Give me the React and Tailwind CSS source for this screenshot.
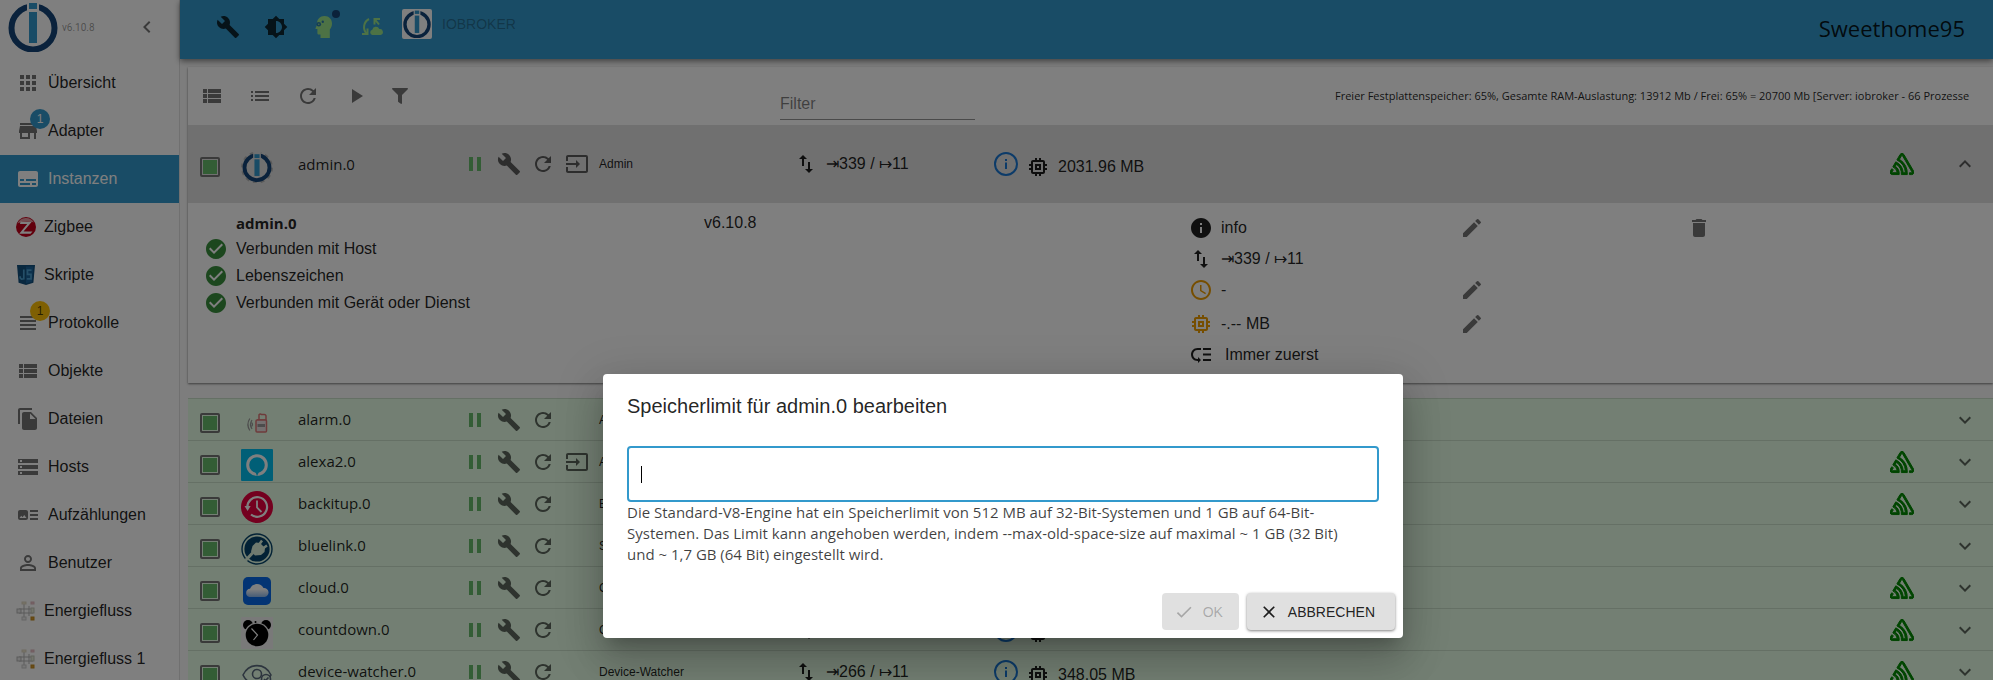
import React from "react";
import {
  MdApps, MdStore, MdSubtitles, MdViewHeadline, MdViewList, MdFileCopy, MdStorage, MdArtTrack,
  MdPermIdentity, MdBuild, MdBrightness6, MdChevronLeft, MdList, MdRefresh, MdPlayArrow, MdPause,
  MdInput, MdImportExport, MdInfo, MdMemory, MdEdit, MdDelete, MdCheckCircle, MdAccessTime,
  MdLowPriority, MdCheck, MdClose, MdExpandMore, MdExpandLess,
} from "react-icons/md";
import { FaFilter } from "react-icons/fa";
import { SiSentry } from "react-icons/si";

function BrokerLogo({ className, gear = false }) {
  return (
    <svg viewBox="0 0 50 50" className={className} aria-hidden="true">
      {gear && <circle cx="25" cy="26" r="23" fill="none" stroke="#b5b5b5" strokeWidth="4" strokeDasharray="6 6.04" />}
      <circle cx="25" cy="26" r={gear ? 19.5 : 21.5} fill={gear ? "#e0e0e0" : "none"} stroke="#144578" strokeWidth="6" />
      <rect x="19" y="0" width="12" height="11" fill={gear ? "#e0e0e0" : "#fff"} />
      <rect x="21" y={gear ? 5 : 1} width="8" height="6" fill="#3399cc" />
      <rect x="21" y={gear ? 13 : 10} width="8" height={gear ? 26 : 31} fill="#3399cc" />
    </svg>
  );
}

function ZigbeeIcon() {
  return (
    <svg viewBox="0 0 20 20" className="size-5">
      <circle cx="10" cy="10" r="10" fill="#c4001a" />
      <path d="M1.500 6.500A9.300 9.300 0 0 1 18 5.500 20 20 0 0 0 1.500 6.500z" fill="#e79aa2" />
      <path d="M4.500 4.500h11.500L7.500 14.500h9l-2 2.300H3.200L11.200 7H4z" fill="#fff" />
    </svg>
  );
}

function ScriptIcon() {
  return (
    <svg viewBox="0 0 20 20" className="size-5">
      <path d="M1 0h18l-1.600 17.800L10 20l-7.400-2.200z" fill="#13507e" />
      <path d="M10 1.500h7.300l-1.300 15.200-6 1.800z" fill="#1a639a" />
      <path d="M7.800 4.500v9.300l-2.300.2-1.300-1.200v-1.500M15.500 5.200h-4v4.200h3.500v4.500h-4.200" fill="none" stroke="#4a9fd0" strokeWidth="1.700" />
    </svg>
  );
}

function EnergyIcon() {
  return (
    <svg viewBox="0 0 20 20" className="size-5" fill="none" stroke="#b5b5b5">
      <path d="M3 8h14M3 12h14M8 2v16M13 5v10" />
      <rect x="1" y="8" width="4" height="4" fill="#ececec" />
      <rect x="6" y="1" width="4" height="2" fill="#f3ead0" stroke="#ddd6c2" />
      <rect x="15" y="1" width="3" height="2" fill="#f3c7cd" stroke="#e0b8be" />
      <rect x="6" y="16" width="4" height="3" fill="#eee" stroke="#ccc" />
      <rect x="15" y="7" width="3" height="5" fill="#e6ead8" stroke="#c4c8b8" />
      <rect x="15" y="16" width="3" height="3" fill="#d69a2c" stroke="#c48a20" />
    </svg>
  );
}

function HeadIcon() {
  return (
    <svg viewBox="0 0 24 24" className="size-6">
      <path d="M12.500 1C17 1 20 4.200 20 8.500c0 2.300-.8 4.500-2.200 6V23H8.500v-3.500H7c-1 0-1.600-.7-1.600-1.600V14H4.200c-.6 0-.9-.6-.6-1.100L5 10V8.500C5 4.300 8 1 12.500 1z" fill="#9be58a" />
      <circle cx="6.800" cy="9.300" r="2.300" fill="#2b7cab" />
      <circle cx="10.800" cy="6.800" r="1.200" fill="#2b7cab" />
      <circle cx="6.800" cy="9.300" r=".7" fill="#9be58a" />
    </svg>
  );
}

function CloudSyncIcon() {
  return (
    <svg viewBox="0 0 24 24" className="size-6">
      <g fill="none" stroke="#9be58a" strokeWidth="2">
        <path d="M9 4C3.500 7 2.500 14 6.500 18.500" />
        <path d="M2 19h5.500v-5.500" />
        <path d="M20 4h-5.500v5.500M15 4.500l4 5" />
      </g>
      <path d="M12.500 20a2.700 2.700 0 0 1-.2-5.300 3.700 3.700 0 0 1 7-.6 3 3 0 0 1 1.200 5.900z" fill="#9be58a" />
    </svg>
  );
}

function AlarmIcon() {
  return (
    <svg viewBox="0 0 32 32" className="size-8" fill="none">
      <g stroke="#999" strokeWidth="1.200">
        <path d="M11 13q-3 4.500 0 9M8.800 11.500q-3.800 6 0 12" />
        <path d="M10.500 15.500q2 2 0 4" />
      </g>
      <path d="M16 13h9v-4a1.500 1.500 0 0 0-1.500-1.500h-3A1.500 1.500 0 0 0 18 9v4" stroke="#d77" strokeWidth="1.500" />
      <rect x="15" y="13" width="10.500" height="12" rx="1" fill="#e8e0e0" stroke="#d77" strokeWidth="1.500" />
      <path d="M16.500 17h7.500v3h-7.500z" fill="#999" />
    </svg>
  );
}

function AlexaIcon() {
  return (
    <svg viewBox="0 0 32 32" className="size-8">
      <rect width="32" height="32" rx="1" fill="#00bfee" />
      <path d="M15.500 26.500v-3.300A7.600 7.600 0 1 1 18 23.300l-2.400 3.200A10.700 10.700 0 1 0 14.500 26.400z" fill="#00bfee" />
      <circle cx="16" cy="16" r="9.300" fill="none" stroke="#fff" strokeWidth="3" />
      <path d="M14 22l2 5 2.500-5z" fill="#00bfee" />
    </svg>
  );
}

function BackupIcon() {
  return (
    <svg viewBox="0 0 32 32" className="size-8">
      <circle cx="16" cy="16" r="16" fill="#e8003f" />
      <path d="M6.500 17a9.800 9.800 0 1 1 3.500 6.500" fill="none" stroke="#fff" strokeWidth="2.200" />
      <path d="M3.500 15h6.200L6.600 20z" fill="#fff" />
      <path d="M16 9.500v7l4.500 4.500" fill="none" stroke="#fff" strokeWidth="1.800" />
    </svg>
  );
}

function PlugIcon() {
  return (
    <svg viewBox="0 0 32 32" className="size-8">
      <circle cx="16" cy="16" r="15" fill="none" stroke="#05436a" strokeWidth="1.400" />
      <circle cx="16" cy="16" r="12.600" fill="#05436a" />
      <path d="M4.500 27.500l7.500-8" stroke="#dff5df" strokeWidth="3" />
      <path d="M11.500 13l3.500-3.500 4 .5 5 5-.5 4-3.500 3-6 .5-4-4z" fill="#dff5df" />
      <path d="M18.500 11l2.500-3.500M22.500 15l3.500-2.500" stroke="#dff5df" strokeWidth="2.500" />
    </svg>
  );
}

function CloudIcon() {
  return (
    <svg viewBox="0 0 32 32" className="size-8">
      <defs>
        <linearGradient id="cloudFill" x1="0" y1="0" x2="0" y2="1">
          <stop offset="0.400" stopColor="#fff" />
          <stop offset="1" stopColor="#8db8ee" />
        </linearGradient>
      </defs>
      <rect x="2" y="2" width="28" height="28" rx="5" fill="#0769e8" />
      <path d="M8.500 22a4.200 4.200 0 0 1 .5-8.300 7.500 7.500 0 0 1 13.500-.7 4.500 4.500 0 0 1 1 9z" fill="url(#cloudFill)" />
    </svg>
  );
}

function CountdownIcon() {
  return (
    <svg viewBox="0 0 32 32" className="size-8">
      <rect width="32" height="32" fill="#f2f2f2" />
      <circle cx="7" cy="8" r="5" />
      <circle cx="25" cy="8" r="5" />
      <circle cx="16" cy="18" r="12.600" fill="#f2f2f2" />
      <circle cx="16" cy="18" r="11.300" />
      <circle cx="14.500" cy="5" r="1" />
      <path d="M10.500 11.500l6 6.500-4 5" fill="none" stroke="#fff" strokeWidth="1.200" />
    </svg>
  );
}

function WatcherIcon() {
  return (
    <svg viewBox="0 0 32 32" className="size-8" fill="none" stroke="#5b6a7d" strokeWidth="1.600">
      <path d="M2 16C8 3.500 24 3.500 30 16 24 28 8 28 2 16z" />
      <circle cx="16" cy="15" r="4.500" />
      <circle cx="25" cy="20" r="4.500" fill="#e6ffe6" />
      <path d="M23 20l1.500 1.500 3-3" />
    </svg>
  );
}

const nav = [
  { label: "Übersicht", icon: MdApps },
  { label: "Adapter", icon: MdStore, badge: "bg-[#3399cc] text-white" },
  { label: "Instanzen", icon: MdSubtitles, active: true },
  { label: "Zigbee", custom: ZigbeeIcon },
  { label: "Skripte", custom: ScriptIcon },
  { label: "Protokolle", icon: MdViewHeadline, badge: "bg-[#ffc107] text-black/70" },
  { label: "Objekte", icon: MdViewList },
  { label: "Dateien", icon: MdFileCopy },
  { label: "Hosts", icon: MdStorage },
  { label: "Aufzählungen", icon: MdArtTrack },
  { label: "Benutzer", icon: MdPermIdentity },
  { label: "Energiefluss", custom: EnergyIcon },
  { label: "Energiefluss 1", custom: EnergyIcon },
];

const instances = [
  { id: "alarm.0", title: "Alarm", icon: AlarmIcon },
  { id: "alexa2.0", title: "Alexa2", icon: AlexaIcon, link: true, sentry: true },
  { id: "backitup.0", title: "Backup", icon: BackupIcon, sentry: true },
  { id: "bluelink.0", title: "Setup", icon: PlugIcon },
  { id: "cloud.0", title: "Cloud", icon: CloudIcon, sentry: true },
  { id: "countdown.0", title: "Countdown", icon: CountdownIcon, sentry: true, running: true },
  { id: "device-watcher.0", title: "Device-Watcher", icon: WatcherIcon, sentry: true, running: true, events: "⇥266 / ↦11", memory: "348.05 MB" },
];

function NavItem({ label, icon: Icon, custom: Custom, badge, active }) {
  return (
    <li>
      <a
        href="#"
        aria-current={active ? "page" : undefined}
        className={`flex h-12 items-center gap-2 pl-4 ${active ? "bg-[#3399cc] text-white" : "text-black/87"}`}
      >
        <span className={`relative flex shrink-0 ${active ? "" : "text-black/54"}`}>
          {Icon ? <Icon className="size-6" /> : <Custom />}
          {badge && (
            <span className={`absolute -top-2.5 left-3.5 flex size-5 items-center justify-center rounded-full text-xs ${badge}`}>1</span>
          )}
        </span>
        {label}
      </a>
    </li>
  );
}

function IconButton({ label, className = "", children }) {
  return (
    <button type="button" aria-label={label} className={`flex shrink-0 items-center justify-center ${className}`}>
      {children}
    </button>
  );
}

function InstanceBar({ id, title, icon, link, sentry, running, events, memory, className, open }) {
  const Icon = icon;
  return (
    <div className={`flex items-center pr-4 pl-3 ${className}`}>
      <div className="flex items-center gap-[21px] pt-1.5">
        <input
          type="checkbox"
          defaultChecked
          aria-label={id}
          className="size-5 appearance-none rounded-xs border-2 border-[#757575] bg-clip-content p-px checked:bg-[#66bb6a]"
        />
        {Icon ? <Icon /> : <BrokerLogo gear className="size-8" />}
      </div>
      <span className="ml-[25px] w-[165px] shrink-0 font-[Open_Sans,sans-serif] text-[15px]">{id}</span>
      <div className="flex w-[126px] shrink-0 gap-2.5 text-black/60">
        <IconButton label="Anhalten" className="text-[#66bb6a]"><MdPause className="size-6" /></IconButton>
        <IconButton label="Konfigurieren"><MdBuild className="size-6" /></IconButton>
        <IconButton label="Neu starten"><MdRefresh className="size-6" /></IconButton>
        {link && <IconButton label="Öffnen"><MdInput className="size-6" /></IconButton>}
      </div>
      <span className="ml-2.5 w-[195px] shrink-0 text-xs">{title}</span>
      {running && (
        <>
          <span className="flex w-[200px] shrink-0 items-center gap-2">
            <MdImportExport className="size-6" />
            {events}
          </span>
          <span className="flex size-6 shrink-0 items-center justify-center rounded-full border-2 border-[#1976d2] text-[#1976d2]">
            <svg viewBox="0 0 12 12" className="size-3" fill="currentColor" aria-hidden="true">
              <path d="M5 1h2v2H5zM5 4.500h2V11H5z" />
            </svg>
          </span>
          <span className="ml-2 flex shrink-0 items-center gap-2 pt-1.5">
            <MdMemory className="size-6" />
            {memory}
          </span>
        </>
      )}
      <span className="ml-auto flex items-center gap-[39px]">
        {sentry && <SiSentry className="size-6 stroke-[#008a00] stroke-1 text-[#008a00]" />}
        <IconButton label={open ? "Zuklappen" : "Aufklappen"} className="text-black/60">
          {open ? <MdExpandLess className="size-6" /> : <MdExpandMore className="size-6" />}
        </IconButton>
      </span>
    </div>
  );
}

function DetailRow({ icon, text, textClass = "", editable }) {
  return (
    <div className={`flex items-center ${editable ? "h-[34px]" : "h-7"}`}>
      <span className="flex flex-[270] items-center gap-2">
        {icon}
        <span className={textClass}>{text}</span>
      </span>
      <span className="flex flex-[227]">
        {editable && <IconButton label={`${text} bearbeiten`} className="text-black/54"><MdEdit className="size-6" /></IconButton>}
      </span>
    </div>
  );
}

export default function App() {
  return (
    <div className="relative flex h-screen overflow-hidden bg-[#fafafa] font-[Liberation_Sans,Arial,sans-serif] text-base text-black/87">
      <nav className="w-[180px] shrink-0 border-r border-black/12 bg-white">
        <div className="flex h-[59px] items-start pl-2">
          <BrokerLogo className="mt-0.5 size-[50px]" />
          <span className="ml-1 flex h-[54px] items-center font-[Roboto,sans-serif] text-[10px] text-black/40">v6.10.8</span>
          <IconButton label="Menü einklappen" className="mr-5 ml-auto h-[54px] text-black/54"><MdChevronLeft className="size-6" /></IconButton>
        </div>
        <ul>
          {nav.map((item) => <NavItem key={item.label} {...item} />)}
        </ul>
      </nav>

      <div className="flex min-w-0 flex-1 flex-col">
        <header className="z-10 flex h-[59px] shrink-0 items-start bg-[#3399cc] pl-6 shadow-[0_2px_6px_rgba(0,0,0,0.5)]">
          <IconButton label="Einstellungen" className="h-[54px] w-12 text-black/75"><MdBuild className="size-6" /></IconButton>
          <IconButton label="Farbschema" className="h-[54px] w-12 text-black/75"><MdBrightness6 className="size-6" /></IconButton>
          <IconButton label="Expertenmodus" className="relative h-[54px] w-12">
            <HeadIcon />
            <span className="absolute top-2.5 right-2 size-2 rounded-full bg-[#164477]" />
          </IconButton>
          <IconButton label="Synchronisieren" className="h-[54px] w-12"><CloudSyncIcon /></IconButton>
          <button type="button" className="ml-1.5 flex h-12 items-center gap-2.5 text-sm text-black/30">
            <span className="flex size-[30px] items-center justify-center rounded-xs bg-white">
              <BrokerLogo className="size-7" />
            </span>
            IOBROKER
          </button>
          <h1 className="mr-7 ml-auto flex h-14 items-center font-[Open_Sans,sans-serif] text-[22px]">Sweethome95</h1>
        </header>

        <main className="flex min-h-0 flex-1 flex-col pt-2 pl-2">
          <section className="shrink-0 bg-white shadow-[0_1px_2px_rgba(0,0,0,0.5)]">
            <div className="flex h-[58px] items-center justify-between">
              <div className="flex w-[232px] text-black/54">
                <IconButton label="Liste" className="size-12"><MdViewList className="size-6" /></IconButton>
                <IconButton label="Kompakte Liste" className="size-12"><MdList className="size-6" /></IconButton>
                <IconButton label="Aktualisieren" className="size-12"><MdRefresh className="size-6" /></IconButton>
                <IconButton label="Starten" className="size-12"><MdPlayArrow className="size-6" /></IconButton>
                <IconButton label="Filtern" className="h-12 w-10"><FaFilter className="size-4" /></IconButton>
              </div>
              <input
                type="text"
                placeholder="Filter"
                aria-label="Filter"
                className="mt-4 h-8 w-[195px] border-b border-black/42 bg-transparent outline-none placeholder:text-black/50"
              />
              <div className="w-[658px] overflow-hidden font-[Open_Sans,sans-serif] text-[11px] whitespace-nowrap">
                Freier Festplattenspeicher: 65%, Gesamte RAM-Auslastung: 13912 Mb / Frei: 65% = 20700 Mb [Server: iobroker - 66 Prozesse
              </div>
            </div>

            <InstanceBar
              id="admin.0"
              title="Admin"
              link
              sentry
              running
              open
              events="⇥339 / ↦11"
              memory="2031.96 MB"
              className="h-[78px] bg-[#e0e0e0]"
            />

            <div className="grid grid-cols-[516fr_485fr_498fr_306fr] pt-2 pb-3.5">
              <div className="pl-4">
                <div className="pl-8 font-[Open_Sans,sans-serif] text-[15px] leading-6 font-bold">admin.0</div>
                {["Verbunden mit Host", "Lebenszeichen", "Verbunden mit Gerät oder Dienst"].map((text) => (
                  <div key={text} className="flex h-[27px] items-center gap-2">
                    <MdCheckCircle className="size-6 text-[#388e3c]" />
                    {text}
                  </div>
                ))}
              </div>
              <div className="leading-6">v6.10.8</div>
              <div>
                <DetailRow editable text="info" icon={<MdInfo className="size-6" />} />
                <DetailRow text="⇥339 / ↦11" icon={<MdImportExport className="size-6" />} />
                <DetailRow editable text="-" icon={<MdAccessTime className="size-6 text-[#ed9c00]" />} />
                <DetailRow editable text="-.-- MB" icon={<MdMemory className="size-6 text-[#ed9c00]" />} />
                <DetailRow text="Immer zuerst" textClass="pl-1" icon={<MdLowPriority className="size-6" />} />
              </div>
              <div className="flex h-[34px]">
                <IconButton label="Löschen" className="text-black/54"><MdDelete className="size-6" /></IconButton>
              </div>
            </div>
          </section>

          <section className="mt-[15px] shrink-0">
            {instances.map((item) => (
              <InstanceBar key={item.id} {...item} className="h-[42px] border-t border-black/12 bg-[#e6ffe6]" />
            ))}
          </section>
        </main>
      </div>

      <div className="absolute inset-0 z-20 flex items-start justify-center bg-black/50 pt-[374px] pl-[13px]">
        <div
          role="dialog"
          aria-modal="true"
          aria-labelledby="limit-title"
          className="w-full max-w-[800px] rounded bg-white shadow-[0_11px_15px_-7px_rgba(0,0,0,0.2),0_24px_38px_3px_rgba(0,0,0,0.14),0_9px_46px_8px_rgba(0,0,0,0.12)]"
        >
          <h2 id="limit-title" className="px-6 py-4 text-xl leading-8">Speicherlimit für admin.0 bearbeiten</h2>
          <div className="px-6 pt-2">
            <div className="relative">
              <input
                type="text"
                aria-labelledby="limit-title"
                className="block h-14 w-full rounded border-2 border-[#3399cc] px-3 caret-transparent outline-none"
              />
              <span className="absolute top-5 left-3.5 h-[17px] w-px bg-black" />
            </div>
            <p className="pr-4 font-[Open_Sans,sans-serif] text-[15px] leading-[21px] text-black/75">
              Die Standard-V8-Engine hat ein Speicherlimit von 512 MB auf 32-Bit-Systemen und 1 GB auf 64-Bit-Systemen. Das Limit kann angehoben werden, indem --max-old-space-size auf maximal ~ 1 GB (32 Bit) und ~ 1,7 GB (64 Bit) eingestellt wird.
            </p>
          </div>
          <div className="flex justify-end gap-2 px-2 pt-7 pb-2 text-sm">
            <button type="button" disabled className="flex h-[37px] items-center gap-[9px] rounded bg-black/12 pr-4 pl-3 text-black/26">
              <MdCheck className="size-5" />
              OK
            </button>
            <button type="button" className="flex h-[37px] items-center gap-[9px] rounded bg-[#e0e0e0] pr-5 pl-3 shadow-[0_1px_3px_rgba(0,0,0,0.5)]">
              <MdClose className="size-5" />
              ABBRECHEN
            </button>
          </div>
        </div>
      </div>
    </div>
  );
}
